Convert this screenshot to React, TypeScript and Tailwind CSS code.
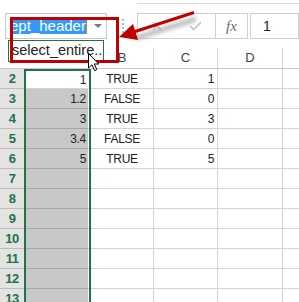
import React from 'react';
import { X, Check } from 'lucide-react';

const rows = [
  { n: 2, a: '1', b: 'TRUE', c: '1' },
  { n: 3, a: '1.2', b: 'FALSE', c: '0' },
  { n: 4, a: '3', b: 'TRUE', c: '3' },
  { n: 5, a: '3.4', b: 'FALSE', c: '0' },
  { n: 6, a: '5', b: 'TRUE', c: '5' },
  { n: 7, a: '', b: '', c: '' },
  { n: 8, a: '', b: '', c: '' },
  { n: 9, a: '', b: '', c: '' },
  { n: 10, a: '', b: '', c: '' },
  { n: 11, a: '', b: '', c: '' },
  { n: 12, a: '', b: '', c: '' },
  { n: 13, a: '', b: '', c: '' },
];

const cellFont = { fontFamily: '"Liberation Sans", Arial, sans-serif' };

const App: React.FC = () => {
  return (
    <div
      className="relative w-[299px] h-[302px] overflow-hidden bg-white text-[#222]"
      style={cellFont}
    >
      {/* top strip + formula bar */}
      <div className="h-[4px] ml-[137px] border-b border-[#dcdcdc]" />
      <div className="h-[9px]" />
      <div className="flex h-[26px] pl-[5px]">
        <div className="relative flex items-center w-[102px] border border-[#c6c6c6] pl-[4px]">
          <span className="h-[16px] leading-[16px] text-[15px] bg-[#3399ff] text-white">
            ept_header
          </span>
          <span className="w-[1px] h-[16px] bg-[#e07a2a]" />
          <span className="ml-auto mr-[4px] w-0 h-0 border-l-[4px] border-r-[4px] border-t-[4px] border-l-transparent border-r-transparent border-t-[#7a7a7a]" />
        </div>
        <div className="w-[30px] flex items-center justify-center">
          <div className="flex flex-col gap-[2px] ml-[1px]">
            <span className="w-[2px] h-[2px] bg-[#b5b5b5]" />
            <span className="w-[2px] h-[2px] bg-[#b5b5b5]" />
            <span className="w-[2px] h-[2px] bg-[#b5b5b5]" />
            <span className="w-[2px] h-[2px] bg-[#b5b5b5]" />
          </div>
        </div>
        <div className="flex w-[111px] border border-[#d0d0d0]">
          <div className="flex items-center justify-around w-[77px]">
            <X size={14} strokeWidth={2.5} className="text-[#c8c8c8]" />
            <Check size={15} strokeWidth={2.5} className="text-[#c2c2c2]" />
          </div>
          <div className="flex-1 flex items-center justify-center border-l border-[#d0d0d0]">
            <span
              className="italic text-[15px] text-[#6a6a6a]"
              style={{ fontFamily: '"Liberation Serif", serif' }}
            >
              fx
            </span>
          </div>
        </div>
        <div className="flex-1 flex items-center ml-[2px] border border-[#d0d0d0] pl-[12px] text-[14px]">
          1
        </div>
      </div>
      <div className="h-[9px]" />

      {/* column headers */}
      <div className="flex h-[21px] border-b border-[#c8c8c8] text-[13px] text-[#444]">
        <div className="w-[24px]" />
        <div className="w-[67px]" />
        <div className="w-[63px] flex items-center justify-center border-r border-[#d4d4d4]">B</div>
        <div className="w-[64px] flex items-center justify-center border-r border-[#d4d4d4]">C</div>
        <div className="w-[65px] flex items-center justify-center border-r border-[#d4d4d4]">D</div>
        <div className="flex-1" />
      </div>

      {/* grid rows */}
      {rows.map((r, i) => (
        <div key={r.n} className="flex h-[20px] text-[12px] tracking-[-0.3px]">
          <div className="w-[24px] flex items-center justify-center bg-[#e3e3e3] border-b border-[#bdbdbd] text-[#217346] font-bold text-[13px] tracking-[-0.5px]">
            {r.n}
          </div>
          <div
            className={
              i === 0
                ? 'w-[67px] flex border-l-2 border-r-2 border-t-2 border-[#217346]'
                : 'w-[67px] flex border-l-2 border-r-2 border-[#217346]'
            }
          >
            <div
              className={
                i === 0
                  ? 'flex-1 flex items-center justify-end pr-[2px] bg-white border-r border-white border-b border-b-[#d4d4d4]'
                  : 'flex-1 flex items-center justify-end pr-[2px] bg-[#c8c8c8] border-r border-white border-b border-b-[#a6a6a6]'
              }
            >
              {r.a}
            </div>
          </div>
          <div className="w-[63px] flex items-center justify-center border-r border-b border-[#d4d4d4]">
            {r.b}
          </div>
          <div className="w-[64px] flex items-center justify-end pr-[3px] border-r border-b border-[#d4d4d4]">
            {r.c}
          </div>
          <div className="w-[65px] border-r border-b border-[#d4d4d4]" />
          <div className="flex-1 border-b border-[#d4d4d4]" />
        </div>
      ))}

      {/* autocomplete dropdown */}
      <div className="absolute left-[8px] top-[40px] w-[96px] h-[22px] flex items-center pl-[3px] bg-white border border-[#217346] text-[14.5px] text-[#222]">
        select_entire..
      </div>

      {/* red highlight box */}
      <div className="absolute left-[10px] top-[17px] w-[109px] h-[46px] border-[3px] border-[#c00000]" />

      {/* red arrow */}
      <svg className="absolute left-0 top-0" width="299" height="80" viewBox="0 0 299 80">
        <defs>
          <filter id="blur" x="-20%" y="-50%" width="140%" height="200%">
            <feGaussianBlur stdDeviation="2" />
          </filter>
        </defs>
        <line x1="136" y1="38" x2="196" y2="19" stroke="#9a9a9a" strokeWidth="4" filter="url(#blur)" opacity="0.8" />
        <line x1="132" y1="32.5" x2="194" y2="12.5" stroke="#c00000" strokeWidth="3" />
        <polygon points="119,37 133,24 138,40" fill="#c00000" />
      </svg>

      {/* mouse cursor */}
      <svg className="absolute left-[88px] top-[53px]" width="13" height="19" viewBox="0 0 13 19">
        <path
          d="M0.5 0.5 L0.5 15 L4 11.8 L6.6 17.6 L8.8 16.6 L6.3 11 L10.8 11 Z"
          fill="white"
          stroke="black"
          strokeWidth="1"
          strokeLinejoin="round"
        />
      </svg>
    </div>
  );
};

export default App;
